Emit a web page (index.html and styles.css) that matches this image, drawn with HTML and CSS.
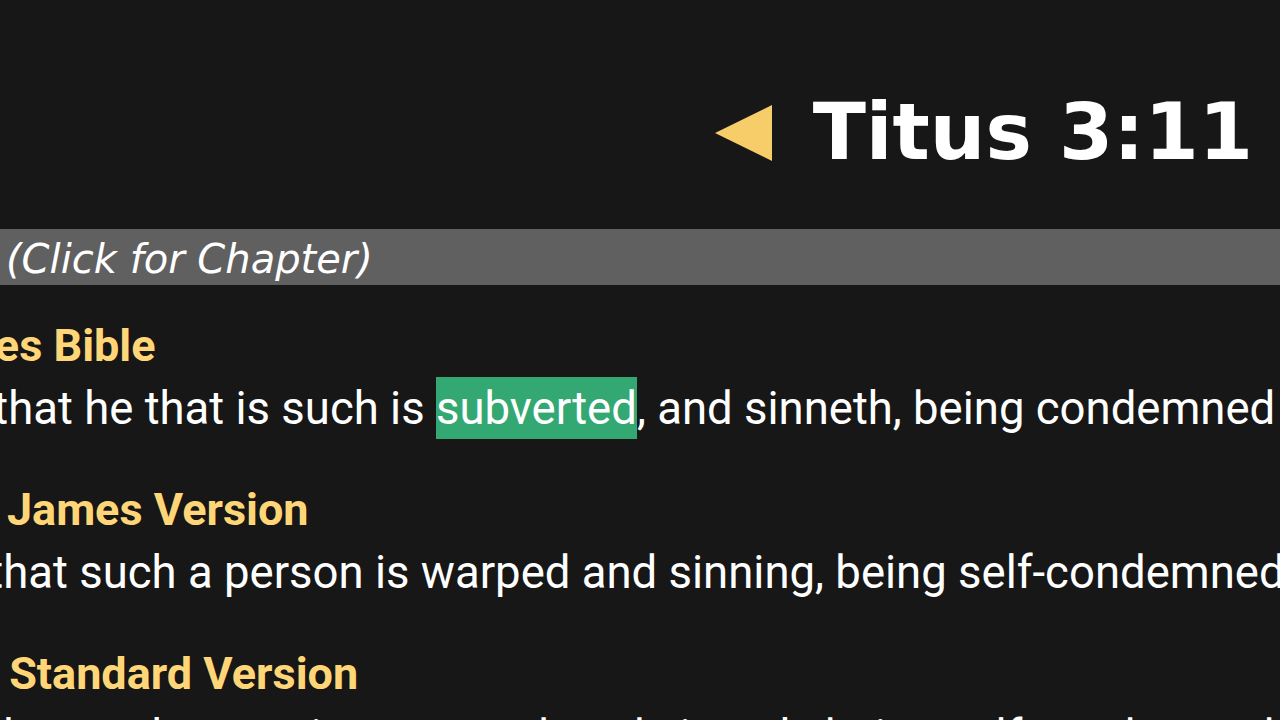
FILE: index.html
```html
<!DOCTYPE html>
<html lang="en">
<head>
<meta charset="utf-8">
<title>Titus 3:11</title>
<link rel="stylesheet" href="styles.css">
</head>
<body>
<div class="page">
  <header class="top">
    <a class="prev" href="#" aria-label="Previous verse">
      <svg width="58" height="58" viewBox="0 0 58 58"><polygon points="0,29 57,1 57,57" fill="#f7cd6a"/></svg>
    </a>
    <h1 class="ref">Titus 3:11</h1>
  </header>
  <div class="chapbar"><span class="chap">(Click for Chapter)</span></div>
  <main class="versions">
    <section class="ver">
      <h2 class="vname">King James Bible</h2>
      <p class="vtext">Knowing that he that is such is <span class="hl">subverted</span>, and sinneth, being condemned of himself.</p>
    </section>
    <section class="ver">
      <h2 class="vname">New King James Version</h2>
      <p class="vtext">knowing that such a person is warped and sinning, being self-condemned.</p>
    </section>
    <section class="ver">
      <h2 class="vname">American Standard Version</h2>
      <p class="vtext">knowing that such a one is perverted, and sinneth, being self-condemned.</p>
    </section>
  </main>
</div>
</body>
</html>
```

FILE: styles.css
```css
html, body {
  margin: 0;
  padding: 0;
  background: #171717;
  overflow: hidden;
}
.page {
  width: 1280px;
  height: 720px;
  overflow: hidden;
  background: #171717;
}
.top {
  height: 229px;
  display: flex;
  align-items: center;
  justify-content: flex-end;
  gap: 40px;
  padding: 34px 27px 0 0;
  box-sizing: border-box;
}
.prev {
  display: flex;
  margin-top: 2px;
}
.ref {
  margin: 0;
  font-family: "DejaVu Sans", Verdana, sans-serif;
  font-weight: bold;
  font-size: 78px;
  color: #ffffff;
  line-height: 1;
  white-space: nowrap;
}
.chapbar {
  height: 56px;
  background: #606060;
  display: flex;
  align-items: center;
  padding-left: 6px;
}
.chap {
  font-family: "DejaVu Sans", Verdana, sans-serif;
  font-style: italic;
  font-size: 40px;
  color: #ffffff;
  white-space: nowrap;
  margin-top: 4px;
}
.versions {
  margin-left: -196px;
  padding-top: 30px;
}
.ver {
  margin-bottom: 38px;
}
.vname {
  margin: 0;
  font-family: Roboto, "Liberation Sans", sans-serif;
  font-weight: bold;
  font-size: 45px;
  line-height: 62px;
  color: #ffd677;
  white-space: nowrap;
}
.vtext {
  margin: 0 0 0 3px;
  font-family: Roboto, "Liberation Sans", sans-serif;
  font-size: 45.5px;
  line-height: 64px;
  color: #ffffff;
  white-space: nowrap;
}
.hl {
  background: #33a872;
  padding: 5px 0 4px;
}
```
